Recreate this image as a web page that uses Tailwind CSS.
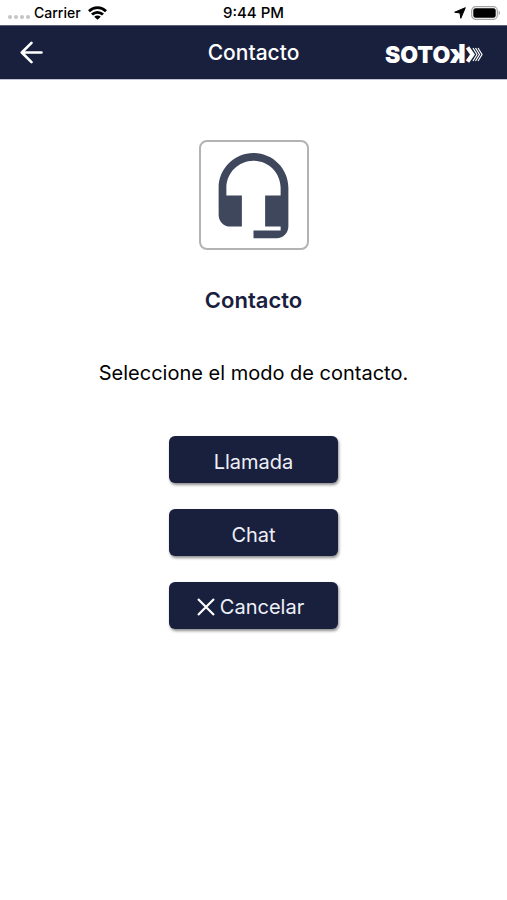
<!DOCTYPE html>
<html lang="es">
<head>
<meta charset="utf-8">
<meta name="viewport" content="width=device-width, initial-scale=1">
<title>Contacto</title>
<script src="https://cdn.jsdelivr.net/npm/@tailwindcss/browser@4"></script>
</head>
<body class="min-h-screen bg-white font-['Inter','Liberation_Sans',sans-serif] text-black">
  <div class="grid h-[25px] grid-cols-3 items-center px-[6px] text-[14px] leading-5 font-medium">
    <div class="flex items-center gap-[7px] pl-[2px]">
      <div class="flex items-center gap-1">
        <div class="flex gap-[2px] pt-2">
          <span class="size-1 rounded-full bg-[#c4c4c4]"></span>
          <span class="size-1 rounded-full bg-[#c4c4c4]"></span>
          <span class="size-1 rounded-full bg-[#c4c4c4]"></span>
          <span class="size-1 rounded-full bg-[#c4c4c4]"></span>
        </div>
        <span>Carrier</span>
      </div>
      <svg class="h-[14px] w-[19px]" viewBox="0 0 19 14" aria-hidden="true">
        <g fill="none" stroke="#000" stroke-width="2.800">
          <path d="M1 5.200C5.800.5 13.200.5 18 5.200"/>
          <path d="M4 8.600C7.200 5.600 11.800 5.600 15 8.600"/>
        </g>
        <path d="M9.500 13.800 6.200 10.800C8 9.100 11 9.100 12.800 10.800Z"/>
      </svg>
    </div>
    <span class="text-center text-[15px]">9:44 PM</span>
    <div class="flex items-center justify-end gap-[5px]">
      <svg class="size-3" viewBox="0 0 12 12" aria-hidden="true"><path d="M11.300.7 6.800 11.300 6 6 .7 5.200Z" fill="#000" stroke="#000" stroke-width="1" stroke-linejoin="round"/></svg>
      <svg class="h-[14px] w-[30px]" viewBox="0 0 30 14" aria-hidden="true">
        <rect x=".7" y=".7" width="25.600" height="12.600" rx="3.800" fill="#fff" stroke="#a3a3a3" stroke-width="1.200"/>
        <rect x="2.300" y="2.300" width="22.400" height="9.400" rx="2.200" fill="#000"/>
        <path d="M27.600 4.800c1.800.6 1.800 3.800 0 4.400z" fill="#a3a3a3"/>
      </svg>
    </div>
  </div>

  <header class="grid h-[55px] grid-cols-3 items-center border-y border-t-[#5b6078] border-b-[#c3c5d6] bg-[#19203e] px-5 text-white">
    <button type="button" aria-label="Volver" class="w-6">
      <svg class="size-[23px]" viewBox="0 0 23 23" fill="none" stroke="#fff" stroke-width="2.600" stroke-linecap="round" stroke-linejoin="round" aria-hidden="true"><path d="M21.500 11.500H2M11.500 1.800 1.800 11.500 11.500 21.200"/></svg>
    </button>
    <h1 class="text-center text-[21px] leading-6 font-medium">Contacto</h1>
    <div class="flex items-center justify-end pt-1 pr-1" role="img" aria-label="SOTOK">
      <div class="flex items-baseline leading-6 font-black">
        <span class="text-[23px]">SOTO</span>
        <span class="inline-block -scale-x-100 text-[26px]">k</span>
      </div>
      <svg class="h-[17px] w-[17px]" viewBox="0 0 17 17" fill="none" stroke="#fff" aria-hidden="true">
        <path d="M1.500 1.500 6.500 8.500 1.500 15.500" stroke-width="4"/>
        <path d="M7 2 11 8.500 7 15M9.500 2 13.500 8.500 9.500 15M12 2 16 8.500 12 15" stroke-width="1.200"/>
      </svg>
    </div>
  </header>

  <main class="flex flex-col items-center px-6 pt-[60px]">
    <div class="flex size-[110px] items-center justify-center rounded-lg border-2 border-[#b3b3b3]">
      <svg class="size-[93px] shrink-0" viewBox="0 0 24 24" fill="#3f475c" aria-hidden="true"><path d="M12 1c-4.970 0-9 4.030-9 9v7c0 1.660 1.340 3 3 3h3v-8H5v-2c0-3.870 3.130-7 7-7s7 3.130 7 7v2h-4v8h4v1h-7v2h6c1.660 0 3-1.340 3-3V10c0-4.970-4.030-9-9-9z"/></svg>
    </div>
    <h2 class="mt-9 text-[22px] leading-7 font-semibold text-[#19203e]">Contacto</h2>
    <p class="mt-11 text-center text-[20px] leading-[30px]">Seleccione el modo de contacto.</p>
    <div class="mt-12 flex w-[169px] flex-col gap-[26px] text-[20px] leading-6 text-[#eef0f8]">
      <button type="button" class="flex h-[47px] items-center justify-center rounded-md bg-[#19203e] pt-1 shadow-[1px_2px_3px_rgba(0,0,0,0.45)]">Llamada</button>
      <button type="button" class="flex h-[47px] items-center justify-center rounded-md bg-[#19203e] pt-1 shadow-[1px_2px_3px_rgba(0,0,0,0.45)]">Chat</button>
      <button type="button" class="flex h-[47px] items-center justify-center gap-[5px] rounded-md bg-[#19203e] pt-[2px] pr-[6px] shadow-[1px_2px_3px_rgba(0,0,0,0.45)]">
        <svg class="size-[18px]" viewBox="0 0 18 18" fill="none" stroke="#fff" stroke-width="2.200" aria-hidden="true"><path d="M1 1 17 17M17 1 1 17"/></svg>
        Cancelar
      </button>
    </div>
  </main>
</body>
</html>
